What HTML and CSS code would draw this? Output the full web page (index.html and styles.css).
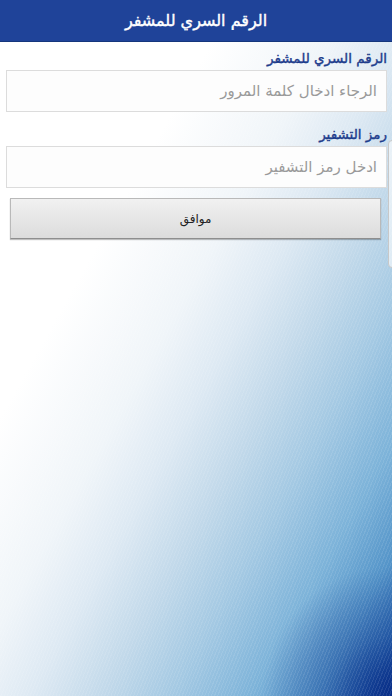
FILE: index.html
```html
<!DOCTYPE html>
<html lang="ar" dir="rtl">
<head>
    <meta charset="UTF-8">
    <meta name="viewport" content="width=device-width, initial-scale=1.0">
    <title>الرقم السري للمشفر</title>
    <link rel="stylesheet" href="styles.css">
</head>
<body>
<div class="page">
    <div class="top-bar">الرقم السري للمشفر</div>
    <div class="form">
        <label class="field-label">الرقم السري للمشفر</label>
        <input class="field" type="password" placeholder="الرجاء ادخال كلمة المرور">
        <label class="field-label second">رمز التشفير</label>
        <input class="field" type="text" placeholder="ادخل رمز التشفير">
        <button class="ok-btn">موافق</button>
    </div>
    <span class="side-tab"></span>
</div>
</body>
</html>
```

FILE: styles.css
```css
*{
    margin: 0;
    padding: 0;
    box-sizing: border-box;
}
html, body{
    height: 100%;
}
body{
    font-family: "DejaVu Sans", "Noto Sans", sans-serif;
}
.page{
    position: relative;
    min-height: 100%;
    /* white top-left fading into deep blue bottom-right, with fine diagonal lines */
    background:
        repeating-linear-gradient(112deg, rgba(255,255,255,0.09) 0 1px, transparent 1px 3px),
        radial-gradient(circle at 100% 100%, rgba(8,45,135,0.9) 0, rgba(8,45,135,0.35) 60px, rgba(8,45,135,0) 130px),
        linear-gradient(to bottom right, #ffffff 0%, #ffffff 30%, #f0f5f9 45%, #dde9f3 54%, #c2d9ea 63%, #a4c9e3 72%, #7db3d9 82%, #5595c9 90%, #2f6cb2 96%, #123f93 100%);
}
.top-bar{
    height: 42px;
    line-height: 41px;
    background: #1f4399;
    border-bottom: 1px solid #15367c;
    color: #fff;
    font-size: 16px;
    -webkit-text-stroke: 0.4px #fff;
    text-align: center;
}
.form{
    display: flex;
    flex-direction: column;
    padding: 4px 5px 0 6px;
}
.field-label{
    font-size: 13.5px;
    color: #1d3c8c;
    -webkit-text-stroke: 0.4px #1d3c8c;
    line-height: 24px;
    height: 24px;
}
.field-label.second{
    margin-top: 10px;
}
.field{
    height: 42px;
    border: 1px solid #dcdcdc;
    background: #fdfdfd;
    padding: 0 9px;
    font-family: inherit;
    font-size: 15px;
    text-align: right;
    outline: none;
}
.field::placeholder{
    color: #9a9a9a;
}
.ok-btn{
    margin: 10px 6px 0 4px;
    height: 41px;
    border: 1px solid #b9b9b9;
    border-bottom-color: #8e8e8e;
    background: linear-gradient(#f1f1f1, #dcdcdc);
    box-shadow: 0 1px 1px rgba(0,0,0,0.25);
    font-family: inherit;
    font-size: 12px;
    color: #222;
}
.side-tab{
    position: absolute;
    right: -4px;
    top: 140px;
    width: 8px;
    height: 128px;
    border: 1px solid #c8c8c8;
    border-radius: 4px;
    background: rgba(255,255,255,0.6);
}
```
